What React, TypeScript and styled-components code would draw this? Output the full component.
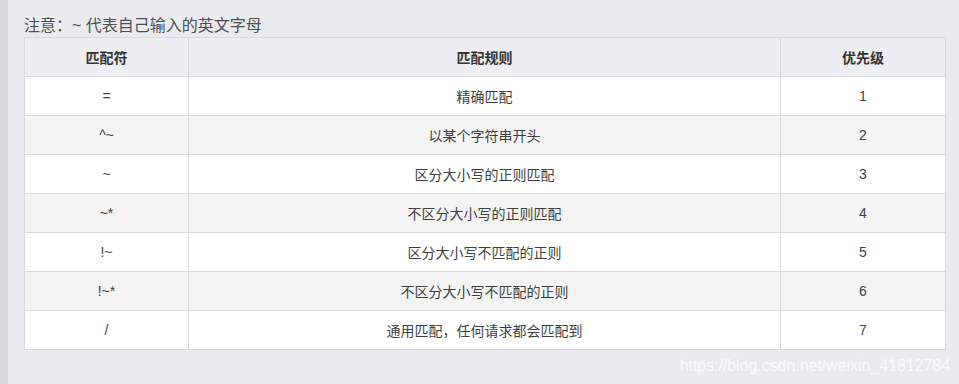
import React from "react";
import styled, { createGlobalStyle } from "styled-components";

const GlobalStyle = createGlobalStyle`
  html, body {
    margin: 0;
    padding: 0;
    background: #eaebef;
  }
  body {
    font-family: "Liberation Sans", "Noto Sans CJK SC", sans-serif;
  }
`;

const Page = styled.div`
  position: relative;
  display: flex;
  width: 959px;
  height: 384px;
  overflow: hidden;
  background: #eaebef;
`;

const SideStrip = styled.div`
  width: 8px;
  flex-shrink: 0;
  background: #d9dadf;
`;

const Content = styled.div`
  flex: 1;
  padding: 14px 14px 0 16px;
`;

const Note = styled.div`
  font-size: 16px;
  line-height: 23px;
  color: #4f4f4f;
  white-space: nowrap;
`;

const Table = styled.table`
  width: 921px;
  border-collapse: collapse;
  table-layout: fixed;
  font-size: 14px;
  color: #3f3f3f;
`;

const HeadCell = styled.th`
  height: 38px;
  padding: 0;
  border: 1px solid #dadada;
  background: #eceef1;
  font-weight: bold;
  color: #333;
  text-align: center;
`;

const Row = styled.tr<{ $striped: boolean }>`
  background: ${p => (p.$striped ? "#f4f4f4" : "#ffffff")};
`;

const Cell = styled.td`
  height: 38px;
  padding: 0;
  border: 1px solid #dadada;
  text-align: center;
`;

const Watermark = styled.div`
  position: absolute;
  right: 9px;
  bottom: 9px;
  font-size: 16px;
  letter-spacing: -0.05px;
  color: rgba(255, 255, 255, 0.75);
  font-family: "Liberation Sans", sans-serif;
`;

const rules: [string, string, string][] = [
  ["=", "精确匹配", "1"],
  ["^~", "以某个字符串开头", "2"],
  ["~", "区分大小写的正则匹配", "3"],
  ["~*", "不区分大小写的正则匹配", "4"],
  ["!~", "区分大小写不匹配的正则", "5"],
  ["!~*", "不区分大小写不匹配的正则", "6"],
  ["/", "通用匹配，任何请求都会匹配到", "7"],
];

export default function App() {
  return (
    <Page>
      <GlobalStyle />
      <SideStrip />
      <Content>
        <Note>注意：~ 代表自己输入的英文字母</Note>
        <Table>
          <colgroup>
            <col style={{ width: 164 }} />
            <col style={{ width: 592 }} />
            <col style={{ width: 165 }} />
          </colgroup>
          <thead>
            <tr>
              <HeadCell>匹配符</HeadCell>
              <HeadCell>匹配规则</HeadCell>
              <HeadCell>优先级</HeadCell>
            </tr>
          </thead>
          <tbody>
            {rules.map(([sym, desc, prio], i) => (
              <Row key={sym} $striped={i % 2 === 1}>
                <Cell>{sym}</Cell>
                <Cell>{desc}</Cell>
                <Cell>{prio}</Cell>
              </Row>
            ))}
          </tbody>
        </Table>
      </Content>
      <Watermark>https://blog.csdn.net/weixin_41812784</Watermark>
    </Page>
  );
}
